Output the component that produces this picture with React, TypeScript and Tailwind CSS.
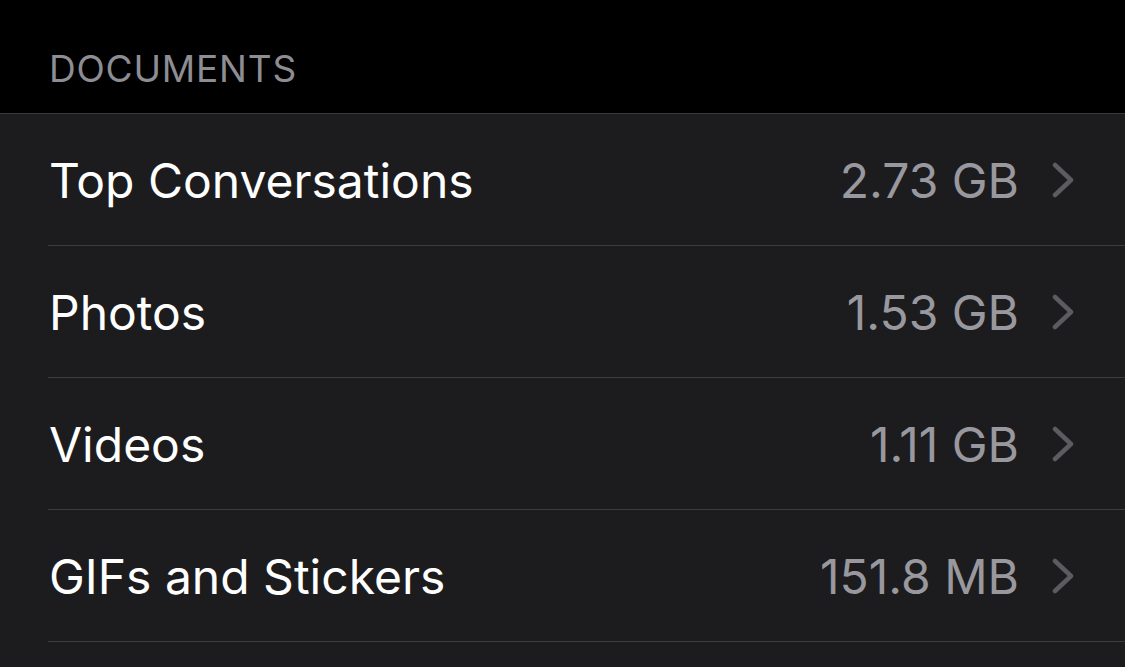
const rows = [
  { label: "Top Conversations", size: "2.73 GB" },
  { label: "Photos", size: "1.53 GB" },
  { label: "Videos", size: "1.11 GB" },
  { label: "GIFs and Stickers", size: "151.8 MB" },
];

function Chevron() {
  return (
    <svg width="22" height="36" viewBox="0 0 22 36" fill="none" className="shrink-0">
      <polyline
        points="3,3 19,18 3,33"
        stroke="#5c5c60"
        strokeWidth="4.5"
        strokeLinecap="round"
        strokeLinejoin="round"
      />
    </svg>
  );
}

export default function App() {
  return (
    <div className="w-[1125px] h-[667px] overflow-hidden bg-[#1c1c1e] font-['Inter',sans-serif]">
      <div className="h-[114px] bg-black border-b border-[#3a3a3c] flex items-end pl-[49px] pb-[26px]">
        <span className="text-[37px] leading-none tracking-[0.8px] text-[#8d8d93]">DOCUMENTS</span>
      </div>
      <div className="pl-[48px]">
        {rows.map((r) => (
          <div key={r.label} className="h-[132px] flex items-center border-b border-[#3d3d40] pr-[51px]">
            <span className="pl-[1px] pt-[2px] text-[48px] text-white">{r.label}</span>
            <span className="ml-auto pt-[2px] text-[48px] text-[#98989e]">{r.size}</span>
            <div className="ml-[33px]">
              <Chevron />
            </div>
          </div>
        ))}
      </div>
    </div>
  );
}
